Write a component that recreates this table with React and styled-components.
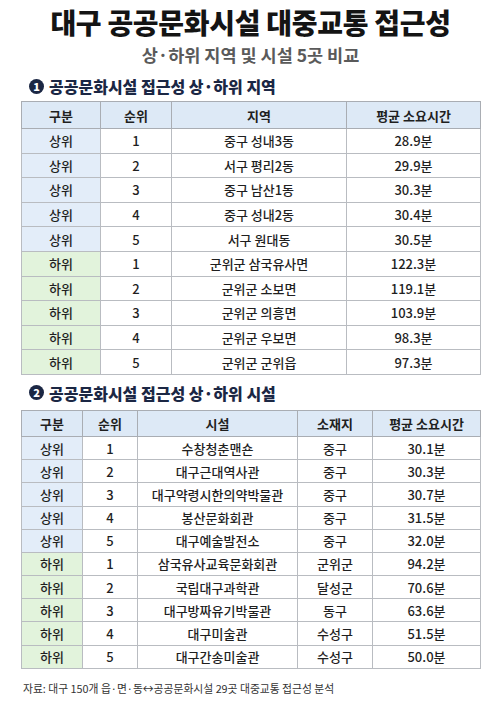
import React from "react";
import styled, { createGlobalStyle } from "styled-components";

const Global = createGlobalStyle`
  html, body { margin: 0; padding: 0; background: #ffffff; }
  body { font-family: "Noto Sans CJK KR", "Noto Sans", sans-serif; color: #1d1d1f; }
`;

const Page = styled.div`
  width: 500px;
  height: 707px;
  box-sizing: border-box;
  padding: 4px 20px 0 21px;
  display: flex;
  flex-direction: column;
  background: #ffffff;
`;

const Title = styled.h1`
  margin: 0;
  font-size: 28px;
  line-height: 36px;
  font-weight: 900;
  text-align: center;
  color: #141414;
  letter-spacing: -0.3px;
`;

const Subtitle = styled.div`
  margin-top: 4px;
  font-size: 17.5px;
  line-height: 22px;
  font-weight: 600;
  text-align: center;
  color: #5a5a5a;
`;

const SectionHeading = styled.h2`
  margin: ${(p) => p.$top}px 0 0 8px;
  display: flex;
  align-items: center;
  gap: 5px;
  font-size: 16px;
  line-height: 20px;
  font-weight: 800;
  color: #1b2744;
`;

const Badge = styled.span`
  width: 15px;
  height: 15px;
  border-radius: 50%;
  background: #1b2744;
  color: #ffffff;
  font-size: 11px;
  font-weight: 800;
  line-height: 15px;
  text-align: center;
  flex: none;
`;

const Table = styled.table`
  margin-top: ${(p) => p.$top}px;
  width: ${(p) => p.$width}px;
  table-layout: fixed;
  border-collapse: collapse;
  border: 1.5px solid #555a60;
  font-size: 13px;
`;

const Th = styled.th`
  height: ${(p) => p.$h}px;
  padding: 0;
  background: #dde9f6;
  border: 1px solid #a9adb3;
  font-weight: 700;
  color: #1f1f1f;
  text-align: center;
  vertical-align: middle;
`;

const Td = styled.td`
  height: ${(p) => p.$h}px;
  padding: 0;
  border: 1px solid #b9bcc1;
  background: ${(p) => (p.$tone === "top" ? "#e3edf9" : p.$tone === "low" ? "#e2f3dc" : "#ffffff")};
  font-weight: 500;
  color: #1f1f1f;
  text-align: center;
  vertical-align: middle;
  white-space: nowrap;
`;

const Footer = styled.div`
  margin-top: 11px;
  padding-left: 2px;
  font-size: 10.8px;
  line-height: 16px;
  color: #333333;
`;

const regions = [
  ["상위", "1", "중구 성내3동", "28.9분"],
  ["상위", "2", "서구 평리2동", "29.9분"],
  ["상위", "3", "중구 남산1동", "30.3분"],
  ["상위", "4", "중구 성내2동", "30.4분"],
  ["상위", "5", "서구 원대동", "30.5분"],
  ["하위", "1", "군위군 삼국유사면", "122.3분"],
  ["하위", "2", "군위군 소보면", "119.1분"],
  ["하위", "3", "군위군 의흥면", "103.9분"],
  ["하위", "4", "군위군 우보면", "98.3분"],
  ["하위", "5", "군위군 군위읍", "97.3분"],
];

const facilities = [
  ["상위", "1", "수창청춘맨숀", "중구", "30.1분"],
  ["상위", "2", "대구근대역사관", "중구", "30.3분"],
  ["상위", "3", "대구약령시한의약박물관", "중구", "30.7분"],
  ["상위", "4", "봉산문화회관", "중구", "31.5분"],
  ["상위", "5", "대구예술발전소", "중구", "32.0분"],
  ["하위", "1", "삼국유사교육문화회관", "군위군", "94.2분"],
  ["하위", "2", "국립대구과학관", "달성군", "70.6분"],
  ["하위", "3", "대구방짜유기박물관", "동구", "63.6분"],
  ["하위", "4", "대구미술관", "수성구", "51.5분"],
  ["하위", "5", "대구간송미술관", "수성구", "50.0분"],
];

function DataTable({ cols, heads, rows, top, headH, rowH }) {
  const width = cols.reduce((a, b) => a + b, 0);
  return (
    <Table $top={top} $width={width}>
      <colgroup>
        {cols.map((w, i) => (
          <col key={i} style={{ width: w }} />
        ))}
      </colgroup>
      <thead>
        <tr>
          {heads.map((h) => (
            <Th key={h} $h={headH}>{h}</Th>
          ))}
        </tr>
      </thead>
      <tbody>
        {rows.map((r, i) => (
          <tr key={i}>
            {r.map((c, j) => (
              <Td key={j} $h={rowH} $tone={j === 0 ? (c === "상위" ? "top" : "low") : undefined}>
                {c}
              </Td>
            ))}
          </tr>
        ))}
      </tbody>
    </Table>
  );
}

export default function App() {
  return (
    <>
      <Global />
      <Page>
        <Title>대구 공공문화시설 대중교통 접근성</Title>
        <Subtitle>상·하위 지역 및 시설 5곳 비교</Subtitle>
        <SectionHeading $top={10}>
          <Badge>1</Badge>
          공공문화시설 접근성 상·하위 지역
        </SectionHeading>
        <DataTable
          top={5}
          cols={[79, 71, 175, 134]}
          heads={["구분", "순위", "지역", "평균 소요시간"]}
          rows={regions}
          headH={26}
          rowH={23.6}
        />
        <SectionHeading $top={8}>
          <Badge>2</Badge>
          공공문화시설 접근성 상·하위 시설
        </SectionHeading>
        <DataTable
          top={7}
          cols={[61, 55, 160, 75, 108]}
          heads={["구분", "순위", "시설", "소재지", "평균 소요시간"]}
          rows={facilities}
          headH={25}
          rowH={22.2}
        />
        <Footer>자료: 대구 150개 읍·면·동↔공공문화시설 29곳 대중교통 접근성 분석</Footer>
      </Page>
    </>
  );
}
